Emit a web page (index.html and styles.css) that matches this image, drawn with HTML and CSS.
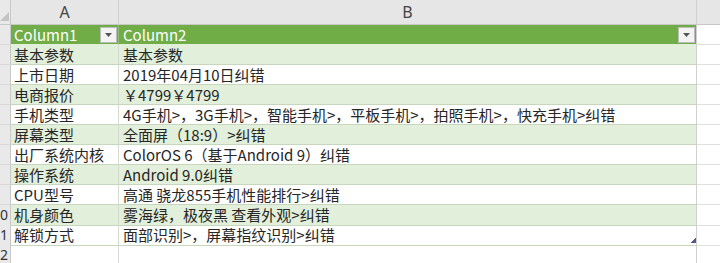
FILE: index.html
```html
<!DOCTYPE html>
<html lang="zh-CN">
<head>
<meta charset="utf-8">
<link rel="stylesheet" href="styles.css">
</head>
<body>
<div class="sheet">
  <div class="row colhead">
    <div class="rh corner"><svg class="tri" width="9" height="9" viewBox="0 0 9 9"><path d="M9 0 V9 H0 Z" fill="#c4c4c4"/></svg></div>
    <div class="ch">A</div>
    <div class="ch">B</div>
    <div class="ch last"></div>
  </div>
  <div class="row thead">
    <div class="rh"></div>
    <div class="c a">Column1<span class="dd"><svg width="7" height="4" viewBox="0 0 7 4"><path d="M0 0H7L3.5 4Z" fill="#555"/></svg></span></div>
    <div class="c b">Column2<span class="dd"><svg width="7" height="4" viewBox="0 0 7 4"><path d="M0 0H7L3.5 4Z" fill="#555"/></svg></span></div>
    <div class="c x"></div>
  </div>
  <div class="row band"><div class="rh"></div><div class="c a">基本参数</div><div class="c b">基本参数</div><div class="c x"></div></div>
  <div class="row"><div class="rh"></div><div class="c a">上市日期</div><div class="c b">2019年04月10日纠错</div><div class="c x"></div></div>
  <div class="row band"><div class="rh"></div><div class="c a">电商报价</div><div class="c b">￥4799￥4799</div><div class="c x"></div></div>
  <div class="row"><div class="rh"></div><div class="c a">手机类型</div><div class="c b">4G手机&gt;，3G手机&gt;，智能手机&gt;，平板手机&gt;，拍照手机&gt;，快充手机&gt;纠错</div><div class="c x"></div></div>
  <div class="row band"><div class="rh"></div><div class="c a">屏幕类型</div><div class="c b">全面屏（18:9）&gt;纠错</div><div class="c x"></div></div>
  <div class="row"><div class="rh"></div><div class="c a">出厂系统内核</div><div class="c b">ColorOS 6（基于Android 9）纠错</div><div class="c x"></div></div>
  <div class="row band"><div class="rh"></div><div class="c a">操作系统</div><div class="c b">Android 9.0纠错</div><div class="c x"></div></div>
  <div class="row"><div class="rh"></div><div class="c a">CPU型号</div><div class="c b">高通 骁龙855手机性能排行&gt;纠错</div><div class="c x"></div></div>
  <div class="row band"><div class="rh"><span>0</span></div><div class="c a">机身颜色</div><div class="c b">雾海绿，极夜黑 查看外观&gt;纠错</div><div class="c x"></div></div>
  <div class="row"><div class="rh"><span>1</span></div><div class="c a">解锁方式</div><div class="c b end">面部识别&gt;，屏幕指纹识别&gt;纠错<span class="resize"></span></div><div class="c x"></div></div>
  <div class="row empty"><div class="rh"><span>2</span></div><div class="c a"></div><div class="c b"></div><div class="c x"></div></div>
</div>
</body>
</html>
```

FILE: styles.css
```css
html, body {
  margin: 0;
  padding: 0;
  background: #ffffff;
}
body {
  width: 720px;
  height: 263px;
  overflow: hidden;
  font-family: "Noto Sans CJK SC", "Noto Sans", sans-serif;
  font-size: 15px;
  color: #262626;
}
.sheet {
  display: flex;
  flex-direction: column;
}
.row {
  display: grid;
  grid-template-columns: 11px 108px 578px 1fr;
  height: 20px;
}
.colhead {
  height: 25px;
  background: #e6e6e6;
}
.rh {
  box-sizing: border-box;
  background: #e9e9e9;
  border-right: 1px solid #c8c8c8;
  border-bottom: 1px solid #d8d8d8;
  display: flex;
  justify-content: flex-start;
  align-items: center;
  font-family: "Noto Sans", sans-serif;
  font-size: 14px;
  line-height: 20px;
  color: #333;
}
.rh span {
  white-space: nowrap;
  padding-left: 0;
}
.corner {
  position: relative;
  border-bottom: 1px solid #c8c8c8;
}
.tri {
  position: absolute;
  right: 1px;
  bottom: 3px;
}
.ch {
  box-sizing: border-box;
  border-right: 1px solid #d0d0d0;
  border-bottom: 1px solid #c8c8c8;
  text-align: center;
  font-family: "Noto Sans", sans-serif;
  font-size: 16px;
  line-height: 24px;
  color: #444;
}
.ch.last { border-right: none; }
.c {
  box-sizing: border-box;
  position: relative;
  white-space: nowrap;
  line-height: 19px;
  border-bottom: 1px solid #c6d7bd;
  overflow: visible;
}
.c.a {
  padding-left: 3px;
  border-right: 1px solid #d5dccf;
}
.c.b {
  padding-left: 4px;
  border-right: 1px solid #cfcfcf;
}
.c.x {
  border-bottom: 1px solid #e0e0e0;
}
.band .c.a, .band .c.b {
  background: #e2efda;
}
.thead .c.a, .thead .c.b {
  background: #70ad47;
  color: #ffffff;
  border-bottom: 1px solid #e2efda;
}
.thead .c.a { border-right: 1px solid #8fbf6e; }
.dd {
  position: absolute;
  right: 1px;
  top: 2px;
  width: 17px;
  height: 16px;
  box-sizing: border-box;
  background: #f3f3f3;
  border: 1px solid #bcbcbc;
  display: flex;
  align-items: center;
  justify-content: center;
}
.empty .c.a, .empty .c.b, .empty .c.x {
  border-bottom: 1px solid #e0e0e0;
}
.empty .c.a { border-right: 1px solid #d8d8d8; }
.resize {
  position: absolute;
  right: 0;
  bottom: 2px;
  width: 5px;
  height: 5px;
  background: linear-gradient(135deg, transparent 50%, #4e5b8a 50%);
}
```
